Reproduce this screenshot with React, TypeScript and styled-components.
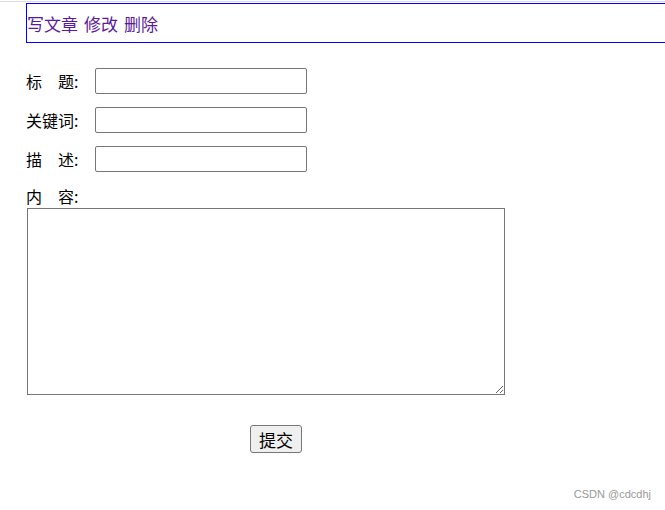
import styled, { createGlobalStyle } from "styled-components";

const GlobalStyle = createGlobalStyle`
  html, body {
    margin: 0;
    padding: 0;
    background: #fff;
    overflow: hidden;
  }
  body {
    font-family: "Noto Sans CJK SC", "Noto Sans", sans-serif;
    font-size: 16px;
    color: #000;
  }
`;

const Page = styled.div`
  position: relative;
  width: 665px;
  height: 510px;
  padding-top: 1px;
  box-sizing: border-box;
  overflow: hidden;
`;

const TopRule = styled.div`
  height: 1px;
  background: #dcdcdc;
`;

// right border sits just outside the window, as in the screenshot
const Nav = styled.div`
  margin: 1px 0 0 26px;
  width: 640px;
  height: 40px;
  box-sizing: border-box;
  border: 1px solid #0000ff;
  display: flex;
  align-items: center;
  gap: 6px;
  font-size: 17px;
`;

const NavLink = styled.a`
  color: #5a1a9b;
  text-decoration: none;
  line-height: 1;
  margin-top: 1px;
`;

const Form = styled.form`
  margin: 25px 0 0 26px;
  display: flex;
  flex-direction: column;
`;

const Row = styled.div`
  display: flex;
  align-items: center;
  gap: 10px;
  height: 26px;
  margin-bottom: 13px;
`;

const Label = styled.span`
  width: 59px;
  white-space: pre;
  line-height: 1;
`;

const TextInput = styled.input`
  width: 212px;
  height: 26px;
  box-sizing: border-box;
  border: 1px solid #767676;
  border-radius: 2px;
  padding: 1px 2px;
  margin: 0;
`;

const BlockLabel = styled.span`
  display: block;
  white-space: pre;
  line-height: 20px;
  margin: 1px 0 2px;
`;

const TextArea = styled.textarea`
  display: block;
  width: 478px;
  height: 187px;
  box-sizing: border-box;
  margin: 0 0 0 1px;
  border: 1px solid #767676;
  border-radius: 0;
  padding: 2px;
`;

const Submit = styled.button`
  align-self: flex-start;
  margin: 30px 0 0 224px;
  width: 52px;
  height: 28px;
  padding: 0;
  font-family: "Noto Sans CJK SC", sans-serif;
  font-size: 17px;
  line-height: 1;
  background: #efefef;
  border: 1px solid #767676;
  border-radius: 3px;
  color: #000;
`;

const Watermark = styled.span`
  position: absolute;
  right: 14px;
  bottom: 10px;
  font-family: "Liberation Sans", Arial, sans-serif;
  font-size: 11px;
  color: #999;
`;

const fields = ["标　题:", "关键词:", "描　述:"];

export default function App() {
  return (
    <>
      <GlobalStyle />
      <Page>
        <TopRule />
        <Nav>
          <NavLink href="#">写文章</NavLink>
          <NavLink href="#">修改</NavLink>
          <NavLink href="#">删除</NavLink>
        </Nav>
        <Form onSubmit={(e) => e.preventDefault()}>
          {fields.map((f) => (
            <Row key={f}>
              <Label>{f}</Label>
              <TextInput type="text" />
            </Row>
          ))}
          <BlockLabel>内　容:</BlockLabel>
          <TextArea />
          <Submit type="submit">提交</Submit>
        </Form>
        <Watermark>CSDN @cdcdhj</Watermark>
      </Page>
    </>
  );
}
